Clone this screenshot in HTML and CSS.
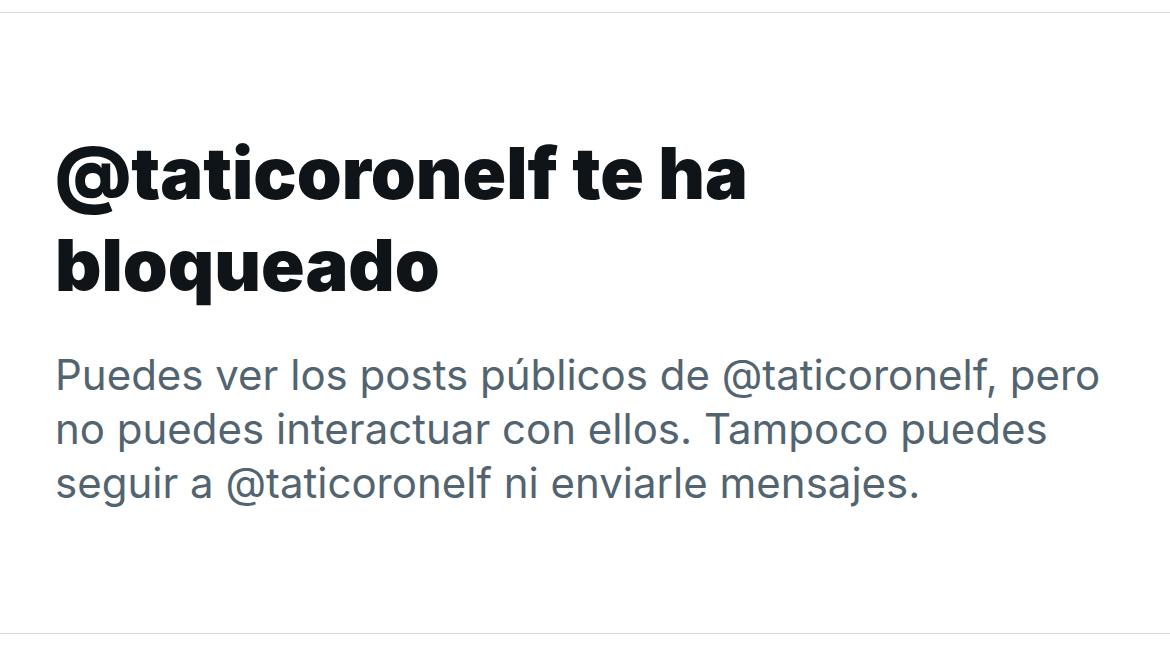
FILE: index.html
```html
<!DOCTYPE html>
<html lang="es">
<head>
    <meta charset="UTF-8">
    <title>Bloqueado</title>
    <link rel="stylesheet" href="styles.css">
</head>
<body>
    <div class="blocked">
        <div class="blocked-inner">
            <h1 class="blocked-title">@taticoronelf te ha bloqueado</h1>
            <p class="blocked-text">Puedes ver los posts públicos de @taticoronelf, pero no puedes interactuar con ellos. Tampoco puedes seguir a @taticoronelf ni enviarle mensajes.</p>
        </div>
    </div>
</body>
</html>
```

FILE: styles.css
```css
body {
    margin: 0;
    padding-top: 12px;
    background-color: #fff;
    font-family: Inter, "Liberation Sans", Arial, sans-serif;
}
.blocked {
    height: 620px;
    border-top: 1px solid #dadada;
    border-bottom: 1px solid #dadada;
}
.blocked-inner {
    padding: 114px 60px 0 55px;
}
.blocked-title {
    margin: 0;
    width: 780px;
    font-size: 72px;
    font-weight: 900;
    line-height: 92px;
    color: #0f1419;
}
.blocked-text {
    margin: 37px 0 0;
    font-size: 42px;
    line-height: 54px;
    color: #536471;
}
```
